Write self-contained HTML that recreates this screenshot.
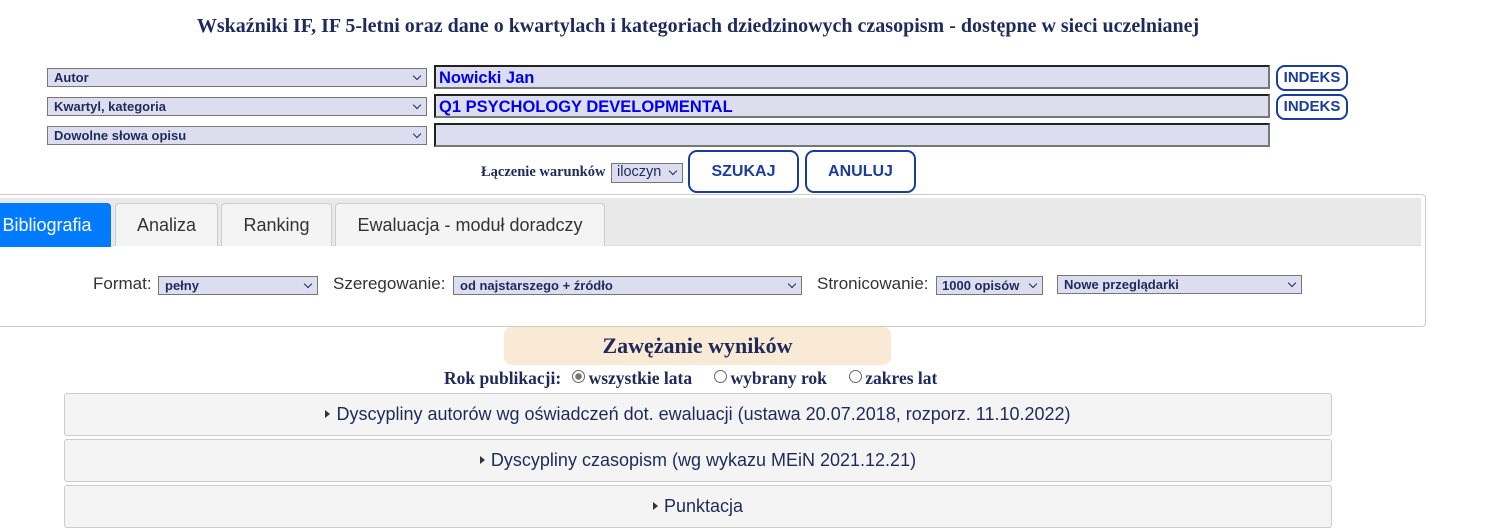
<!DOCTYPE html>
<html><head><meta charset="utf-8"><style>
body{margin:0;width:1512px;height:528px;position:relative;background:#fff;overflow:hidden;font-family:"Liberation Sans",sans-serif;color:#1f2a5a}
.a{position:absolute;box-sizing:border-box}
.t{font-family:"Liberation Serif",serif;font-weight:bold;color:#1f2a5a}
.sel{background:#dcdef0;border:1px solid #777;font-size:13px;font-weight:bold;color:#1f2a5a;padding-left:6px;line-height:17px;white-space:nowrap;overflow:hidden}
.sel:after{content:"";position:absolute;right:6px;top:4px;width:5px;height:5px;border-right:1.5px solid #1f2a5a;border-bottom:1.5px solid #1f2a5a;transform:rotate(45deg)}
.inp{background:#dcdef0;border:2px solid #777;border-top-color:#222;border-left-color:#222;font-size:16.5px;font-weight:bold;color:#0000ee;padding-left:3px;line-height:22px;font-family:"Liberation Sans",sans-serif}
.ind{border:2px solid #1a3d9c;border-radius:9px;color:#1a3d9c;font-weight:bold;font-size:15px;text-align:center;line-height:21px}
.btn{border:2px solid #1a3d9c;border-radius:9px;color:#1a3d9c;font-weight:bold;font-size:16px;text-align:center;line-height:40px;background:#fff}
.tab{background:#f4f4f4;border:1px solid #ccc;border-bottom:none;border-radius:4px 4px 0 0;font-size:18px;text-align:center;line-height:42px;color:#333}
.lab{font-size:17px;color:#333}
.acc{background:#f4f4f4;border:1px solid #ccc;border-radius:3px;font-size:18px;text-align:center;color:#1f2a5a;line-height:40px}
.tri{display:inline-block;width:0;height:0;border-left:5px solid #333;border-top:4px solid transparent;border-bottom:4px solid transparent;margin-right:6px;vertical-align:2px}
.r{display:inline-block;width:11px;height:11px;border:1px solid #666;border-radius:50%;vertical-align:1px;background:#fff}
</style></head><body>
<div class="a t" style="left:0;width:1396px;top:15px;text-align:center;font-size:20px">Wskaźniki IF, IF 5-letni oraz dane o kwartylach i kategoriach dziedzinowych czasopism - dostępne w sieci uczelnianej</div>

<div class="a sel" style="left:47px;top:68px;width:380px;height:19px">Autor</div>
<div class="a sel" style="left:47px;top:97px;width:380px;height:19px">Kwartyl, kategoria</div>
<div class="a sel" style="left:47px;top:126px;width:380px;height:19px">Dowolne słowa opisu</div>
<div class="a inp" style="left:434px;top:65px;width:836px;height:24px">Nowicki Jan</div>
<div class="a inp" style="left:434px;top:94px;width:836px;height:24px">Q1 PSYCHOLOGY DEVELOPMENTAL</div>
<div class="a inp" style="left:434px;top:123px;width:836px;height:24px"></div>
<div class="a ind" style="left:1276px;top:65px;width:72px;height:26px">INDEKS</div>
<div class="a ind" style="left:1276px;top:94px;width:72px;height:26px">INDEKS</div>

<div class="a t" style="left:481px;top:164px;font-size:14.5px">Łączenie warunków</div>
<div class="a sel" style="left:611px;top:163px;width:72px;height:20px;font-size:14.5px;font-weight:normal;padding-left:5px">iloczyn</div>
<div class="a btn" style="left:688px;top:150px;width:111px;height:43px">SZUKAJ</div>
<div class="a btn" style="left:805px;top:150px;width:111px;height:43px">ANULUJ</div>

<div class="a" style="left:-5px;top:194px;width:1431px;height:133px;border:1px solid #ccc;border-radius:4px"></div>
<div class="a" style="left:0;top:198px;width:1421px;height:48px;background:#e9e9e9;border-bottom:1px solid #ddd"></div>
<div class="a tab" style="left:-17px;top:203px;width:128px;height:44px;background:#007bff;border-color:#007bff;color:#fff">Bibliografia</div>
<div class="a tab" style="left:115px;top:203px;width:103px;height:43px">Analiza</div>
<div class="a tab" style="left:221px;top:203px;width:111px;height:43px">Ranking</div>
<div class="a tab" style="left:335px;top:203px;width:270px;height:43px">Ewaluacja - moduł doradczy</div>

<div class="a lab" style="left:93px;top:274px">Format:</div>
<div class="a sel" style="left:158px;top:276px;width:160px;height:19px">pełny</div>
<div class="a lab" style="left:333px;top:274px">Szeregowanie:</div>
<div class="a sel" style="left:453px;top:276px;width:349px;height:19px">od najstarszego + źródło</div>
<div class="a lab" style="left:817px;top:274px">Stronicowanie:</div>
<div class="a sel" style="left:936px;top:276px;width:107px;height:19px;padding-left:5px">1000 opisów</div>
<div class="a sel" style="left:1057px;top:275px;width:245px;height:19px">Nowe przeglądarki</div>

<div class="a t" style="left:504px;top:327px;width:387px;height:38px;background:#f9ead6;border-radius:8px;text-align:center;font-size:22px;line-height:38px">Zawężanie wyników</div>
<div class="a t" style="left:444px;top:368px;font-size:17.5px;white-space:nowrap">Rok publikacji: <span class="r" style="margin:0 4px 0 6px;background:radial-gradient(#777 38%,#fff 46%)"></span>wszystkie lata <span class="r" style="margin:0 3px 0 18px"></span>wybrany rok <span class="r" style="margin:0 3px 0 18px"></span>zakres lat</div>

<div class="a acc" style="left:64px;top:393px;width:1268px;height:43px"><span class="tri"></span>Dyscypliny autorów wg oświadczeń dot. ewaluacji (ustawa 20.07.2018, rozporz. 11.10.2022)</div>
<div class="a acc" style="left:64px;top:439px;width:1268px;height:43px"><span class="tri"></span>Dyscypliny czasopism (wg wykazu MEiN 2021.12.21)</div>
<div class="a acc" style="left:64px;top:485px;width:1268px;height:43px"><span class="tri"></span>Punktacja</div>
</body></html>
